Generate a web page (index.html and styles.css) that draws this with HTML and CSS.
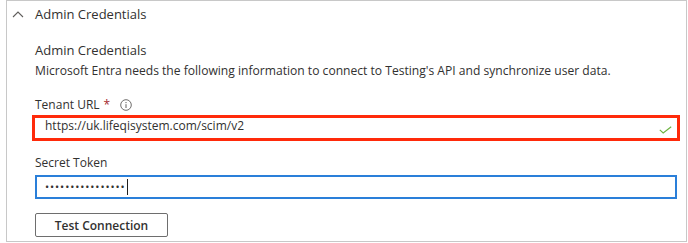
FILE: index.html
```html
<!DOCTYPE html>
<html>
<head>
<meta charset="utf-8">
<link rel="stylesheet" href="styles.css">
</head>
<body>
<div class="frame">
  <div class="header">
    <svg class="chevron" width="12" height="8" viewBox="0 0 12 8"><path d="M1 7 L6 2 L11 7" fill="none" stroke="#605e5c" stroke-width="1.1"/></svg>
    <span class="header-title">Admin Credentials</span>
  </div>
  <div class="content">
    <div class="subtitle">Admin Credentials</div>
    <div class="desc">Microsoft Entra needs the following information to connect to Testing's API and synchronize user data.</div>
    <div class="label label-first">Tenant URL <span class="req">*</span>
      <svg class="info" width="12" height="12" viewBox="0 0 12 12"><circle cx="6" cy="6" r="5.3" fill="none" stroke="#605e5c" stroke-width="0.9"/><circle cx="6" cy="3.6" r="0.7" fill="#605e5c"/><path d="M6 5.2 V9" stroke="#605e5c" stroke-width="1"/></svg>
    </div>
    <div class="url-field">
      <span class="url-text">https://uk.lifeqisystem.com/scim/v2</span>
      <svg class="check" width="13" height="8" viewBox="0 0 13 8"><path d="M0.8 3.8 L4.2 7 L12.2 0.8" fill="none" stroke="#6bb33e" stroke-width="1.1"/></svg>
    </div>
    <div class="label label-second">Secret Token</div>
    <div class="token-field">
      <span class="dots">••••••••••••••••</span><span class="caret"></span>
    </div>
    <button class="btn">Test Connection</button>
  </div>
</div>
</body>
</html>
```
FILE: styles.css
```css
html, body {
  margin: 0;
  padding: 0;
  background: #ffffff;
}
body {
  width: 688px;
  height: 243px;
  overflow: hidden;
  font-family: "Open Sans", "Noto Sans", sans-serif;
  color: #323130;
}
.frame {
  margin-left: 6px;
  width: 679px;
  height: 240px;
  border: 1px solid #c8c8c8;
  box-sizing: content-box;
}
.header {
  display: flex;
  align-items: center;
  height: 26px;
  padding-left: 5px;
}
.chevron {
  display: block;
  margin-top: -1px;
}
.header-title {
  margin-left: 11px;
  font-size: 13px;
  line-height: 20px;
}
.content {
  padding-left: 28px;
  padding-right: 8px;
}
.subtitle {
  margin-top: 13px;
  font-size: 13px;
  line-height: 20px;
}
.desc {
  margin-top: 2px;
  font-size: 12.1px;
  line-height: 18px;
  white-space: nowrap;
}
.label {
  font-size: 12px;
  line-height: 18px;
  display: flex;
  align-items: center;
}
.label-first {
  margin-top: 16px;
}
.req {
  color: #a4262c;
  margin-left: 4px;
}
.info {
  margin-left: 10px;
}
.url-field {
  margin-top: 1px;
  margin-left: -3px;
  width: 627px;
  height: 20px;
  border: 3px solid #ff2a0a;
  display: flex;
  align-items: flex-start;
  justify-content: space-between;
  padding: 0 5px 0 10px;
  box-sizing: content-box;
}
.url-text {
  font-size: 12px;
  line-height: 18px;
  margin-top: -1px;
}
.check {
  display: block;
  margin-top: 8px;
}
.label-second {
  margin-top: 13px;
}
.token-field {
  margin-top: 3px;
  width: 630px;
  height: 20px;
  border: 2px solid #2a7fd9;
  display: flex;
  align-items: center;
  padding-left: 8px;
  box-sizing: content-box;
}
.dots {
  font-size: 11px;
  letter-spacing: 0.9px;
  line-height: 14px;
  color: #323130;
}
.caret {
  display: inline-block;
  width: 1px;
  height: 16px;
  background: #201f1e;
  margin-left: 1px;
}
.btn {
  display: block;
  margin-top: 14px;
  width: 133px;
  height: 24px;
  border: 1px solid #6e6e6e;
  border-radius: 2px;
  background: #ffffff;
  font-family: "Open Sans", "Noto Sans", sans-serif;
  font-size: 12px;
  font-weight: 600;
  color: #323130;
  padding: 0;
}
```
